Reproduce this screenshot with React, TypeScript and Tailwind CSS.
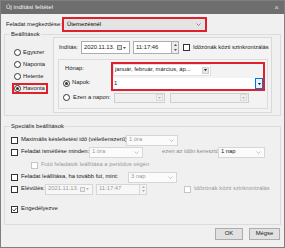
import React from "react";

const Check = ({ checked = false, disabled = false }: { checked?: boolean; disabled?: boolean }) => (
  <div
    className={`w-[7px] h-[7px] shrink-0 border bg-white flex items-center justify-center ${
      disabled ? "border-[#c6c6c6]" : "border-[#333333]"
    }`}
  >
    {checked && (
      <svg width="5" height="5" viewBox="0 0 5 5">
        <path d="M0.5 2.5 L2 4 L4.5 1" stroke="#333" strokeWidth="0.9" fill="none" />
      </svg>
    )}
  </div>
);

const Radio = ({ checked = false }: { checked?: boolean }) => (
  <div className="w-[7px] h-[7px] shrink-0 rounded-full border border-[#333333] bg-white flex items-center justify-center">
    {checked && <div className="w-[3px] h-[3px] rounded-full bg-[#333333]" />}
  </div>
);

const DropBtn = ({ disabled = false }: { disabled?: boolean }) => (
  <div
    className={`w-[7px] h-[7px] shrink-0 flex items-center justify-center border ${
      disabled ? "border-[#dadada] bg-[#f0f0f0]" : "border-[#cfcfcf] bg-[#e6e6e6]"
    }`}
  >
    <svg width="3" height="2" viewBox="0 0 3 2">
      <path d="M0 0 H3 L1.5 2 Z" fill={disabled ? "#b5b5b5" : "#111"} />
    </svg>
  </div>
);

const Chevron = ({ color = "#8a8a8a" }: { color?: string }) => (
  <svg width="5" height="3" viewBox="0 0 5 3" className="shrink-0">
    <path d="M0.5 0.5 L2.5 2.5 L4.5 0.5" stroke={color} strokeWidth="0.7" fill="none" />
  </svg>
);

const SpecCombo = ({ w, text, dark = false }: { w: string; text: string; dark?: boolean }) => (
  <div className={`${w} h-[11px] shrink-0 border border-[#d6d6d6] bg-[#fbfbfb] flex items-center justify-between pl-[2px] pr-[3px]`}>
    <span className={dark ? "text-[#222]" : "text-[#9a9a9a]"}>{text}</span>
    <Chevron color="#b0b0b0" />
  </div>
);

const CalIcon = ({ disabled = false }: { disabled?: boolean }) => (
  <div className="flex items-center gap-[1px] shrink-0">
    <div className={`w-[5px] h-[5px] border ${disabled ? "border-[#c4c4c4] bg-[#eeeeee]" : "border-[#8a8a8a] bg-[#d9d9d9]"}`} />
    <svg width="3" height="2" viewBox="0 0 3 2">
      <path d="M0 0 H3 L1.5 2 Z" fill={disabled ? "#b0b0b0" : "#555"} />
    </svg>
  </div>
);

const Spin = ({ disabled = false }: { disabled?: boolean }) => (
  <div className={`w-[7px] h-full flex flex-col border-y border-r ${disabled ? "border-[#d6d6d6] bg-[#f4f4f4]" : "border-[#adadad] bg-[#ececec]"}`}>
    <div className="flex-1 flex items-center justify-center">
      <svg width="3" height="2" viewBox="0 0 3 2">
        <path d="M0 2 H3 L1.5 0 Z" fill={disabled ? "#b0b0b0" : "#555"} />
      </svg>
    </div>
    <div className="flex-1 flex items-center justify-center">
      <svg width="3" height="2" viewBox="0 0 3 2">
        <path d="M0 0 H3 L1.5 2 Z" fill={disabled ? "#b0b0b0" : "#555"} />
      </svg>
    </div>
  </div>
);

export default function App() {
  return (
    <div className="w-[285px] h-[248px] border border-[#7f7f7f] bg-[#f0f0f0] flex flex-col font-['Liberation_Sans',Arial,sans-serif] text-[5.85px] leading-none text-[#1a1a1a] overflow-hidden whitespace-nowrap">
      {/* title bar */}
      <div className="h-[13px] shrink-0 bg-[#6e6e6e] flex items-center justify-between pl-[5px] pr-[5px] text-[#f2f2f2]">
        <span className="text-[6.2px]">Új indítási feltétel</span>
        <span className="text-[8px] text-[#d8d8d8]">×</span>
      </div>

      {/* Feladat megkezdése */}
      <div className="mt-[3px] h-[15px] shrink-0 flex items-center pl-[5px]">
        <span className="w-[56px] shrink-0">Feladat megkezdése:</span>
        <div className="w-[145px] h-[15px] border-2 border-[#e0202c] bg-[#e4e4e4] flex items-center justify-between pl-[3px] pr-[4px]">
          <span className="text-black">Ütemezésnél</span>
          <Chevron color="#666" />
        </div>
      </div>

      <div className="px-[3px] flex flex-col">
        {/* Beállítások group */}
        <div className="relative mt-[2px] w-[277px] border border-[#dcdcdc] flex flex-col pb-[2px]">
          <span className="absolute left-[5px] top-[-4px] bg-[#f0f0f0] px-[1px] h-[7px] leading-[7px]">Beállítások</span>
          <div className="mt-[2px] flex">
            {/* left radios */}
            <div className="w-[48px] shrink-0 flex flex-col gap-[1px] pt-[10px] pl-[7px]">
              {[
                ["Egyszer", false],
                ["Naponta", false],
                ["Hetente", false],
                ["Havonta", true],
              ].map(([label, sel]) => (
                <div
                  key={label as string}
                  className={`h-[11px] w-[36px] border-2 flex items-center gap-[2px] ${
                    sel ? "border-[#e0202c]" : "border-transparent"
                  }`}
                >
                  <Radio checked={sel as boolean} />
                  <span>{label as string}</span>
                </div>
              ))}
            </div>

            {/* right panel */}
            <div className="w-[219px] h-[76px] border border-[#d9d9d9] bg-[#f3f3f3] flex flex-col">
              {/* Indítás row */}
              <div className="mt-[3px] h-[13px] flex items-center pl-[5px]">
                <span className="w-[22px] shrink-0">Indítás:</span>
                <div className="w-[49px] h-[13px] border border-[#adadad] bg-white flex items-center justify-between pl-[2px] pr-[3px]">
                  <span>2020.11.13.</span>
                  <CalIcon />
                </div>
                <div className="ml-[3px] h-[13px] flex">
                  <div className="w-[39px] h-full border border-[#adadad] bg-white flex items-center pl-[2px]">
                    <span>11:17:46</span>
                  </div>
                  <Spin />
                </div>
                <div className="ml-[4px] flex items-center gap-[3px]">
                  <Check />
                  <span>Időzónák közti szinkronizálás</span>
                </div>
              </div>

              {/* inner box */}
              <div className="ml-[4px] mt-[5px] w-[210px] h-[50px] border border-[#dcdcdc] flex flex-col">
                <div className="mt-[2px] flex">
                  <div className="w-[52px] shrink-0 flex flex-col">
                    <div className="h-[14px] flex items-center pl-[6px]">Hónap:</div>
                    <div className="h-[14px] flex items-center pl-[4px] gap-[2px]">
                      <Radio checked />
                      <span>Napok:</span>
                    </div>
                  </div>
                  <div className="w-[154px] h-[29px] border-2 border-[#e0202c] flex flex-col gap-[2px]">
                    <div className="w-[98px] h-[12px] bg-white border border-[#e2e2e2] flex items-center justify-between pl-[1px] pr-[1px]">
                      <span>január, február, március, áp...</span>
                      <DropBtn />
                    </div>
                    <div className="w-[150px] h-[11px] bg-white flex items-center justify-between pl-[1px]">
                      <span>1</span>
                      <div className="h-[11px] w-[8px] border border-[#0078d7] bg-[#e5f1fb] flex items-center justify-center">
                        <svg width="3" height="2" viewBox="0 0 3 2">
                          <path d="M0 0 H3 L1.5 2 Z" fill="#111" />
                        </svg>
                      </div>
                    </div>
                  </div>
                </div>
                <div className="mt-[1px] h-[11px] flex items-center">
                  <div className="w-[55px] shrink-0 flex items-center pl-[4px] gap-[3px]">
                    <Radio />
                    <span>Ezen a napon:</span>
                  </div>
                  <div className="w-[51px] h-[10px] border border-[#cfcfcf] bg-[#f0f0f0] flex items-center justify-end pr-[1px]">
                    <DropBtn disabled />
                  </div>
                  <div className="ml-[5px] w-[79px] h-[10px] border border-[#cfcfcf] bg-[#f0f0f0] flex items-center justify-end pr-[1px]">
                    <DropBtn disabled />
                  </div>
                </div>
              </div>
            </div>
          </div>
        </div>

        {/* Speciális beállítások group */}
        <div className="relative mt-[10px] w-[277px] h-[99px] border border-[#dcdcdc] flex flex-col pl-[6px]">
          <span className="absolute left-[5px] top-[-4px] bg-[#f0f0f0] px-[1px] h-[7px] leading-[7px]">Speciális beállítások</span>
          <div className="mt-[7px] h-[12px] flex items-center">
            <Check />
            <span className="ml-[3px] w-[105px] shrink-0">Maximális késleltetési idő (véletlenszerű):</span>
            <SpecCombo w="w-[52px]" text="1 óra" />
          </div>
          <div className="h-[12px] flex items-center">
            <Check />
            <span className="ml-[3px] w-[68px] shrink-0">Feladat ismétlése minden:</span>
            <SpecCombo w="w-[54px]" text="1 óra" />
            <span className="ml-[19px] w-[56px] shrink-0 text-[#8c8c8c]">ezen az időn keresztül:</span>
            <SpecCombo w="w-[47px]" text="1 nap" dark />
          </div>
          <div className="mt-[1px] h-[12px] flex items-center pl-[20px]">
            <Check disabled />
            <span className="ml-[3px] text-[#9a9a9a]">Futó feladatok leállítása a periódus végén</span>
          </div>
          <div className="h-[12px] flex items-center">
            <Check />
            <span className="ml-[3px] w-[107px] shrink-0">Feladat leállítása, ha tovább fut, mint:</span>
            <SpecCombo w="w-[49px]" text="3 nap" />
          </div>
          <div className="h-[12px] flex items-center">
            <Check />
            <span className="ml-[3px] w-[24px] shrink-0">Elévülés:</span>
            <div className="w-[48px] h-[11px] border border-[#d6d6d6] bg-[#f7f7f7] flex items-center justify-between pl-[2px] pr-[3px] text-[#9a9a9a]">
              <span>2021.11.13.</span>
              <CalIcon disabled />
            </div>
            <div className="ml-[3px] h-[11px] flex">
              <div className="w-[44px] h-full border border-[#d6d6d6] bg-[#f7f7f7] flex items-center pl-[2px] text-[#9a9a9a]">
                <span>11:17:47</span>
              </div>
              <Spin disabled />
            </div>
            <div className="ml-[37px] flex items-center gap-[3px]">
              <Check disabled />
              <span className="text-[#9a9a9a]">Időzónák közti szinkronizálás</span>
            </div>
          </div>
          <div className="mt-[8px] h-[12px] flex items-center">
            <Check checked />
            <span className="ml-[3px]">Engedélyezve</span>
          </div>
        </div>
      </div>

      {/* buttons */}
      <div className="mt-[3px] flex justify-end gap-[6px] pr-[4px]">
        <div className="w-[28px] h-[12px] border border-[#adadad] bg-[#e1e1e1] flex items-center justify-center">OK</div>
        <div className="w-[31px] h-[12px] border border-[#adadad] bg-[#e1e1e1] flex items-center justify-center">Mégse</div>
      </div>
    </div>
  );
}
